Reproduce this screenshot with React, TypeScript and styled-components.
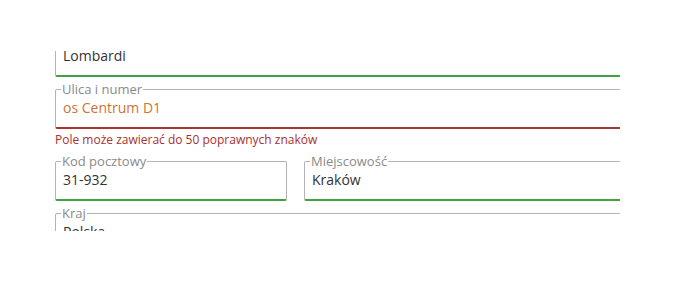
import React from "react";
import styled, { createGlobalStyle } from "styled-components";

const Global = createGlobalStyle`
  html, body { margin: 0; padding: 0; background: #ffffff; }
  body { font-family: "Open Sans", "Noto Sans", sans-serif; }
  * { box-sizing: border-box; }
`;

type Status = "valid" | "invalid";

const statusColor: Record<Status, string> = {
  valid: "#3fa33f",
  invalid: "#a83434",
};

const Viewport = styled.div`
  margin-top: 51px;
  width: 620px;
  height: 180px;
  overflow: hidden;
`;

const Form = styled.form`
  width: 760px;
  margin-top: -23px;
  padding-left: 55px;
  display: flex;
  flex-direction: column;
  gap: 3px;
`;

const Group = styled.div`
  display: flex;
  flex-direction: column;
  min-width: 0;
`;

const Fieldset = styled.fieldset<{ $status?: Status }>`
  margin: 0;
  min-width: 0;
  padding: 0 7px 9px;
  border: 1px solid #b3b3b3;
  border-bottom: 2px solid ${(p) => (p.$status ? statusColor[p.$status] : "#b3b3b3")};
  border-radius: 2px;
`;

const Legend = styled.legend`
  margin-left: -2px;
  padding: 0 1px;
  font-size: 13px;
  line-height: 18px;
  color: #8a8a8a;
`;

const Value = styled.div<{ $status?: Status }>`
  height: 20px;
  font-size: 14px;
  line-height: 20px;
  color: ${(p) => (p.$status === "invalid" ? "#cc7436" : "#333333")};
  white-space: nowrap;
`;

const ErrorText = styled.div`
  margin-top: 3px;
  padding-bottom: 1px;
  font-size: 12px;
  line-height: 16px;
  color: #a9302f;
`;

const Row = styled.div`
  display: grid;
  grid-template-columns: 232px 1fr;
  column-gap: 17px;
`;

type FieldProps = { label: string; value: string; status?: Status; error?: string };

function Field({ label, value, status, error }: FieldProps) {
  return (
    <Group>
      <Fieldset $status={status}>
        <Legend>{label}</Legend>
        <Value $status={status}>{value}</Value>
      </Fieldset>
      {error && <ErrorText>{error}</ErrorText>}
    </Group>
  );
}

export default function App() {
  return (
    <>
      <Global />
      <Viewport>
        <Form onSubmit={(e) => e.preventDefault()}>
          <Field label="Nazwa firmy" value="Lombardi" status="valid" />
          <Field
            label="Ulica i numer"
            value="os Centrum D1"
            status="invalid"
            error="Pole może zawierać do 50 poprawnych znaków"
          />
          <Row>
            <Field label="Kod pocztowy" value="31-932" status="valid" />
            <Field label="Miejscowość" value="Kraków" status="valid" />
          </Row>
          <Field label="Kraj" value="Polska" />
        </Form>
      </Viewport>
    </>
  );
}
